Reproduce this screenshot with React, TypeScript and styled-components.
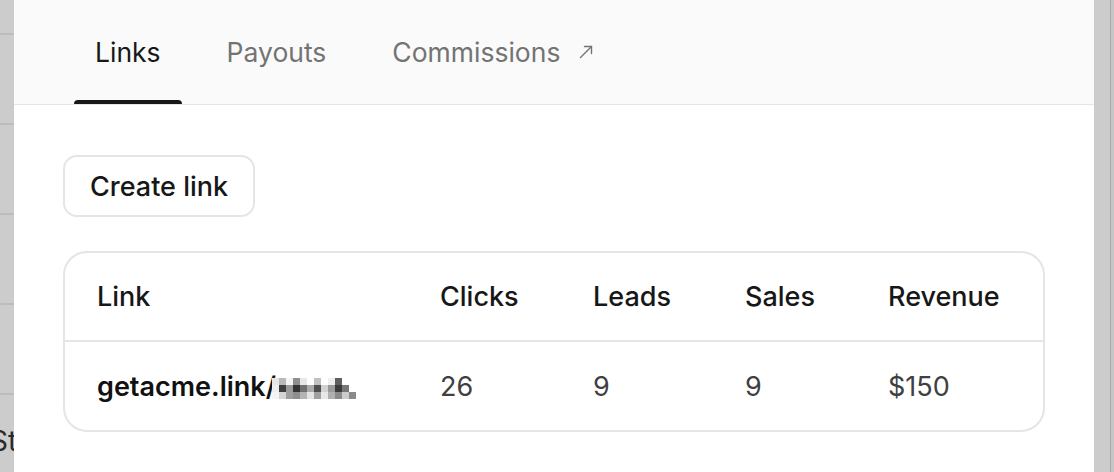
import React from "react";
import styled, { createGlobalStyle } from "styled-components";

const GlobalStyle = createGlobalStyle`
  html, body {
    margin: 0;
    padding: 0;
    overflow: hidden;
    background: #cccccc;
  }
  body {
    font-family: Inter, "Noto Sans", "Liberation Sans", sans-serif;
    -webkit-font-smoothing: antialiased;
  }
  * { box-sizing: border-box; }
`;

const Page = styled.div`
  display: flex;
  width: 1114px;
  height: 472px;
  background: #cccccc;
  overflow: hidden;
`;

const LeftStrip = styled.div`
  width: 14px;
  flex: none;
  display: flex;
  flex-direction: column;
  overflow: hidden;
`;

const StripRow = styled.div<{ $first?: boolean }>`
  height: ${(p) => (p.$first ? 35 : 90)}px;
  flex: none;
  border-bottom: 2px solid #bcbcbc;
`;

const StripLast = styled.div`
  flex: 1;
  display: flex;
  align-items: center;
  padding-top: 14px;
  margin-left: -10px;
  font-size: 28px;
  color: #2a2a2a;
  white-space: nowrap;
`;

const RightStrip = styled.div`
  width: 20px;
  flex: none;
  display: flex;
  justify-content: flex-end;
  background: #cccccc;
`;

const Scroll = styled.div`
  width: 4px;
  border-left: 1px solid #a9a9a9;
  background: #c6c6c6;
`;

const Panel = styled.div`
  width: 1080px;
  flex: none;
  background: #ffffff;
  display: flex;
  flex-direction: column;
`;

const TabBar = styled.nav`
  height: 105px;
  flex: none;
  background: #fafafa;
  border-bottom: 1px solid #e5e5e5;
  display: flex;
  align-items: stretch;
  gap: 24px;
  padding-left: 60px;
`;

const Tab = styled.div<{ $active?: boolean }>`
  position: relative;
  display: flex;
  align-items: center;
  gap: 18px;
  padding: 0 21px 1px;
  font-size: 26.5px;
  font-weight: 400;
  color: ${(p) => (p.$active ? "#171717" : "#737373")};
  &::after {
    content: "";
    display: ${(p) => (p.$active ? "block" : "none")};
    position: absolute;
    left: 0;
    right: 0;
    bottom: 0;
    height: 4px;
    border-radius: 4px 4px 0 0;
    background: #171717;
  }
`;

const Content = styled.div`
  padding: 50px 49px 0;
  display: flex;
  flex-direction: column;
  align-items: flex-start;
  gap: 34px;
`;

const Button = styled.button`
  height: 62px;
  padding: 0 25px;
  border: 2px solid #e5e5e5;
  border-radius: 14px;
  background: #ffffff;
  font-family: inherit;
  font-size: 27px;
  font-weight: 500;
  color: #171717;
  cursor: pointer;
`;

const Card = styled.div`
  width: 982px;
  border: 2px solid #e5e5e5;
  border-radius: 24px;
  overflow: hidden;
`;

const Row = styled.div<{ $head?: boolean }>`
  display: grid;
  grid-template-columns: 343px 153px 152px 143px 1fr;
  align-items: center;
  padding-left: 32px;
  font-size: 27px;
  border-top: ${(p) => (p.$head ? "none" : "2px solid #e5e5e5")};
  height: ${(p) => (p.$head ? 87 : 90)}px;
`;

const HeadCell = styled.div`
  font-weight: 500;
  color: #171717;
`;

const Cell = styled.div`
  color: #404040;
`;

const LinkCell = styled.div`
  display: flex;
  align-items: center;
  font-weight: 600;
  color: #111111;
`;

const Pixels = styled.svg`
  display: block;
  margin-left: -4px;
  margin-top: 4px;
`;

const ArrowIcon = () => (
  <svg width="16" height="16" viewBox="0 0 16 16" fill="none" stroke="#737373" strokeWidth="1.4" strokeLinecap="round" strokeLinejoin="round">
    <path d="M2.5 13.5 13.5 2.5" />
    <path d="M6.5 2.5h7v7" />
  </svg>
);

const pixelRows = [
  ["#e6e6e6", "#b9b9b9", "#f4f4f4", "#8f8f8f", "#e8e8e8", "#ffffff", "#c0c0c0", "#ffffff", "#eeeeee", "#5f5f5f", "#ffffff", "#ffffff"],
  ["#eeeeee", "#3f3f3f", "#9a9a9a", "#333333", "#707070", "#aaaaaa", "#4d4d4d", "#d2d2d2", "#9a9a9a", "#3a3a3a", "#777777", "#ffffff"],
  ["#f4f4f4", "#d4d4d4", "#9e9e9e", "#8e8e8e", "#b4b4b4", "#e4e4e4", "#a0a0a0", "#e8e8e8", "#b0b0b0", "#8a8a8a", "#cccccc", "#8a8a8a"],
];

const Mosaic = () => (
  <Pixels width="84" height="21" viewBox="0 0 84 21">
    {pixelRows.map((row, r) =>
      row.map((c, i) => <rect key={`${r}-${i}`} x={i * 7} y={r * 7} width="7" height="7" fill={c} />)
    )}
  </Pixels>
);

export default function App() {
  return (
    <>
      <GlobalStyle />
      <Page>
        <LeftStrip>
          <StripRow $first />
          <StripRow />
          <StripRow />
          <StripRow />
          <StripRow />
          <StripLast>St</StripLast>
        </LeftStrip>
        <Panel>
          <TabBar>
            <Tab $active>Links</Tab>
            <Tab>Payouts</Tab>
            <Tab>
              Commissions
              <ArrowIcon />
            </Tab>
          </TabBar>
          <Content>
            <Button>Create link</Button>
            <Card>
              <Row $head>
                <HeadCell>Link</HeadCell>
                <HeadCell>Clicks</HeadCell>
                <HeadCell>Leads</HeadCell>
                <HeadCell>Sales</HeadCell>
                <HeadCell>Revenue</HeadCell>
              </Row>
              <Row>
                <LinkCell>
                  getacme.link/
                  <Mosaic />
                </LinkCell>
                <Cell>26</Cell>
                <Cell>9</Cell>
                <Cell>9</Cell>
                <Cell>$150</Cell>
              </Row>
            </Card>
          </Content>
        </Panel>
        <RightStrip>
          <Scroll />
        </RightStrip>
      </Page>
    </>
  );
}
